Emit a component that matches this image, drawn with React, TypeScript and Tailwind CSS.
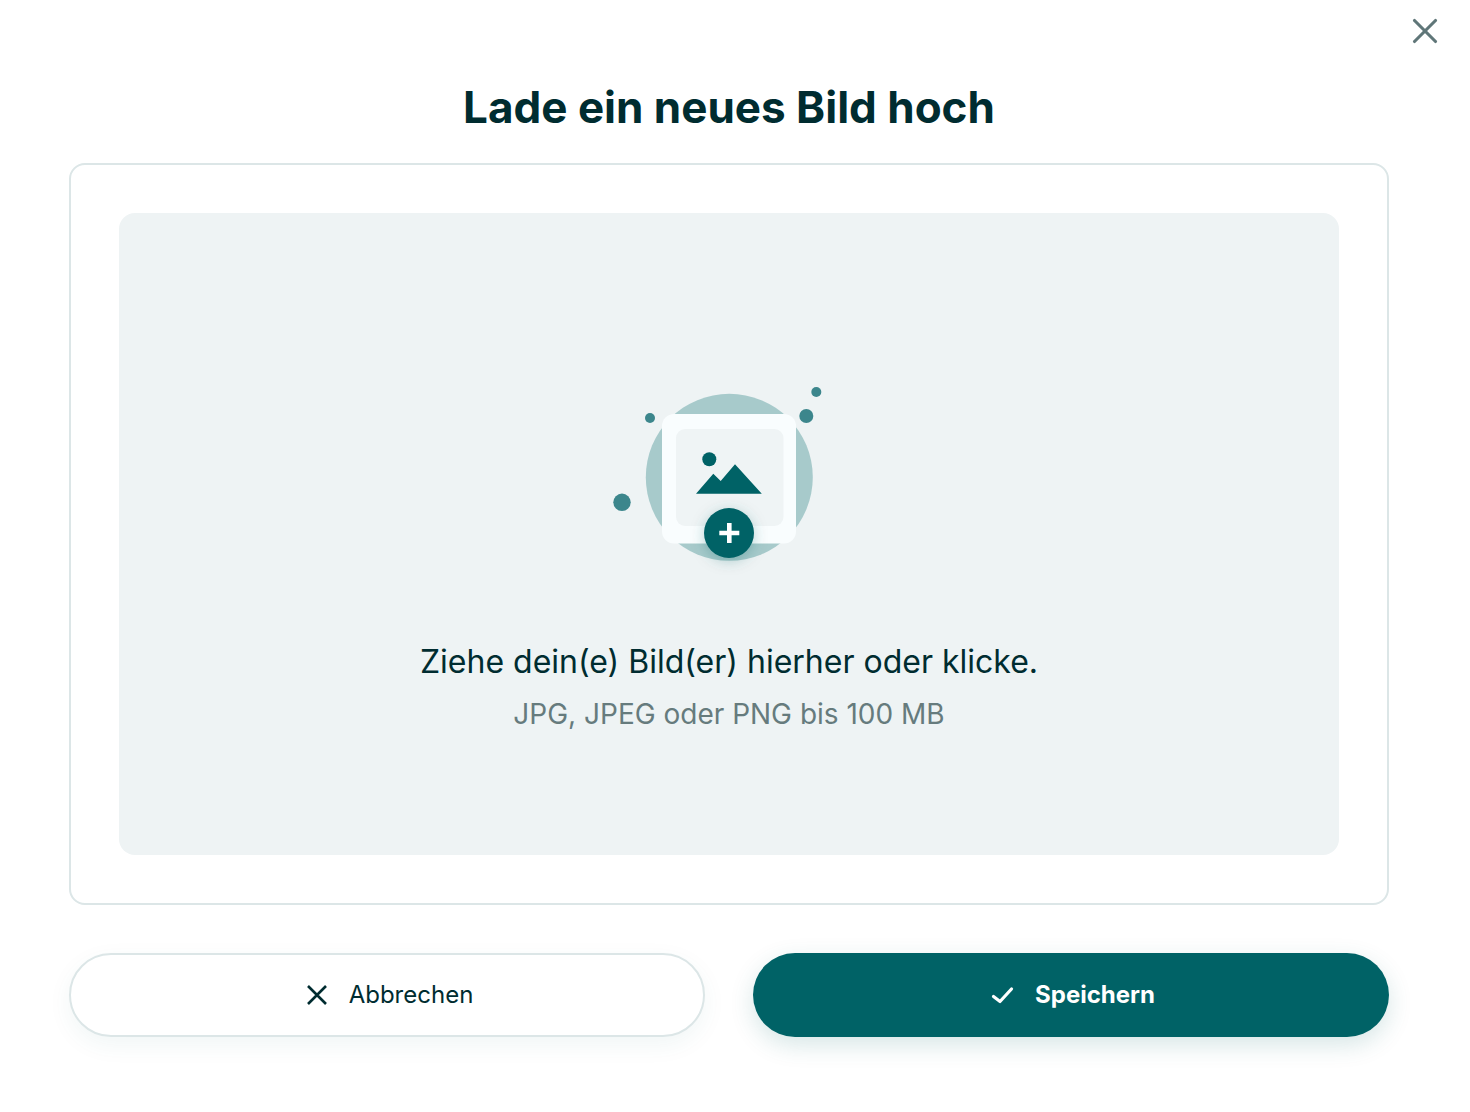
import { X } from 'lucide-react';

function UploadIllustration() {
  return (
    <svg width="240" height="200" viewBox="609 375 240 200" className="block">
      <defs>
        <filter id="plusShadow" x="-60%" y="-60%" width="220%" height="220%">
          <feDropShadow dx="0" dy="3" stdDeviation="7" floodColor="#006266" floodOpacity="0.28" />
        </filter>
      </defs>
      <circle cx="729.3" cy="477.3" r="83.5" fill="#a7cacb" />
      <rect x="662" y="414" width="134" height="129.5" rx="12" fill="#f9fdfe" />
      <rect x="676" y="429" width="107.5" height="97" rx="9" fill="#eff4f5" />
      <circle cx="709.3" cy="459.3" r="7" fill="#006266" />
      <path d="M696 493.8L713.3 473.7L720.7 481L735 464.3L761.8 493.8Z" fill="#006266" />
      <circle cx="729" cy="533" r="25" fill="#006266" filter="url(#plusShadow)" />
      <path d="M719.3 533H739.3M729.3 523V543" stroke="#ffffff" strokeWidth="4.6" />
      <circle cx="650" cy="418" r="5" fill="#3c868c" />
      <circle cx="622" cy="502.3" r="8.7" fill="#3c868c" />
      <circle cx="806.3" cy="416" r="7" fill="#3c868c" />
      <circle cx="816.3" cy="392" r="5" fill="#3c868c" />
    </svg>
  );
}

export default function App() {
  return (
    <main className="relative min-h-[1112px] bg-white pl-[69px] pt-[76px] font-['Inter',sans-serif] text-[#002c30]">
      {/* Close */}
      <button className="absolute right-[24px] top-[10px] text-[#5f7678]">
        <X className="h-[42px] w-[42px]" strokeWidth={1.8} />
      </button>

      <div className="w-[1320px]">
        <h1 className="h-[62px] text-center text-[44px] font-bold leading-[62px] text-[#002c30]">
          Lade ein neues Bild hoch
        </h1>

        {/* Upload card */}
        <div className="mt-[25px] rounded-[16px] border-2 border-[#dce6e7] p-[48px]">
          <div className="flex h-[642px] flex-col items-center rounded-[16px] bg-[#eef3f4] pt-[162px]">
            <UploadIllustration />
            <p className="mt-[65px] text-[32px] leading-[44px] text-[#002c30]">
              Ziehe dein(e) Bild(er) hierher oder klicke.
            </p>
            <p className="mt-[10px] text-[28px] leading-[40px] text-[#667b7d]">
              JPG, JPEG oder PNG bis 100 MB
            </p>
          </div>
        </div>

        {/* Actions */}
        <div className="mt-[48px] grid grid-cols-2 gap-[48px]">
          <button className="flex h-[84px] items-center justify-center gap-[20px] rounded-full border-2 border-[#dce6e7] bg-white pl-[4px] text-[24px] text-[#002c30] shadow-[0_8px_24px_rgba(0,98,102,0.06)]">
            <svg width="24" height="24" viewBox="0 0 24 24" fill="none" stroke="currentColor" strokeWidth="2.6">
              <path d="M3 3L21 21M21 3L3 21" />
            </svg>
            Abbrechen
          </button>
          <button className="flex h-[84px] items-center justify-center gap-[20px] rounded-full bg-[#006266] pl-[4px] text-[24px] font-bold text-white shadow-[0_8px_24px_rgba(0,98,102,0.16)]">
            <svg width="24" height="24" viewBox="0 0 24 24" fill="none" stroke="currentColor" strokeWidth="3.2" strokeLinecap="round" strokeLinejoin="round">
              <path d="M2.5 13.5L9 18.5L20.5 6" />
            </svg>
            Speichern
          </button>
        </div>
      </div>
    </main>
  );
}
